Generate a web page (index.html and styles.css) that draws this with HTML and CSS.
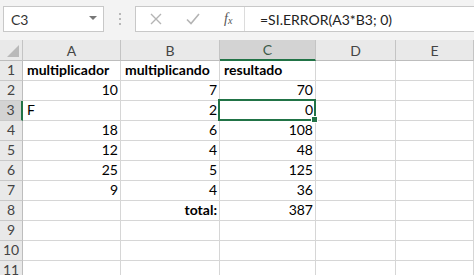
FILE: index.html
```html
<!DOCTYPE html>
<html lang="es">
<head>
    <meta charset="UTF-8">
    <title>Hoja de cálculo</title>
    <link rel="stylesheet" href="styles.css">
</head>
<body>
<div class="topbar">
    <div class="namebox">
        <span class="namebox_text">C3</span>
        <span class="namebox_arrow"></span>
    </div>
    <div class="dots">
        <span></span><span></span><span></span>
    </div>
    <div class="formulabox">
        <div class="formulabox_icons">
            <svg class="ico" width="12" height="12" viewBox="0 0 12 12">
                <path d="M1 1 L11 11 M11 1 L1 11" stroke="#b4b4b4" stroke-width="1.4" fill="none"/>
            </svg>
            <svg class="ico" width="14" height="12" viewBox="0 0 14 12">
                <path d="M1 6.5 L5 10.5 L13 1" stroke="#b4b4b4" stroke-width="1.6" fill="none"/>
            </svg>
            <span class="fx">f<sub>x</sub></span>
        </div>
        <div class="formulabox_text">=SI.ERROR(A3*B3; 0)</div>
    </div>
</div>

<div class="sheet">
    <div class="hd corner"><span class="corner_tri"></span></div>
    <div class="hd">A</div>
    <div class="hd">B</div>
    <div class="hd hd_sel">C</div>
    <div class="hd">D</div>
    <div class="hd">E</div>

    <div class="rh">1</div>
    <div class="c b">multiplicador</div>
    <div class="c b">multiplicando</div>
    <div class="c b">resultado</div>
    <div class="c"></div>
    <div class="c"></div>

    <div class="rh">2</div>
    <div class="c n">10</div>
    <div class="c n">7</div>
    <div class="c n">70</div>
    <div class="c"></div>
    <div class="c"></div>

    <div class="rh rh_sel">3</div>
    <div class="c">F</div>
    <div class="c n">2</div>
    <div class="c n sel">0</div>
    <div class="c"></div>
    <div class="c"></div>

    <div class="rh">4</div>
    <div class="c n">18</div>
    <div class="c n">6</div>
    <div class="c n">108</div>
    <div class="c"></div>
    <div class="c"></div>

    <div class="rh">5</div>
    <div class="c n">12</div>
    <div class="c n">4</div>
    <div class="c n">48</div>
    <div class="c"></div>
    <div class="c"></div>

    <div class="rh">6</div>
    <div class="c n">25</div>
    <div class="c n">5</div>
    <div class="c n">125</div>
    <div class="c"></div>
    <div class="c"></div>

    <div class="rh">7</div>
    <div class="c n">9</div>
    <div class="c n">4</div>
    <div class="c n">36</div>
    <div class="c"></div>
    <div class="c"></div>

    <div class="rh">8</div>
    <div class="c"></div>
    <div class="c n b">total:</div>
    <div class="c n">387</div>
    <div class="c"></div>
    <div class="c"></div>

    <div class="rh">9</div>
    <div class="c"></div>
    <div class="c"></div>
    <div class="c"></div>
    <div class="c"></div>
    <div class="c"></div>

    <div class="rh">10</div>
    <div class="c"></div>
    <div class="c"></div>
    <div class="c"></div>
    <div class="c"></div>
    <div class="c"></div>

    <div class="rh">11</div>
    <div class="c"></div>
    <div class="c"></div>
    <div class="c"></div>
    <div class="c"></div>
    <div class="c"></div>
</div>
</body>
</html>
```

FILE: styles.css
```css
body {
    margin: 0;
    background-color: #ffffff;
    font-family: Lato, "Liberation Sans", sans-serif;
    color: #000000;
    overflow: hidden;
}

/* barra de fórmulas */
.topbar {
    display: flex;
    align-items: flex-start;
    height: 40px;
    padding: 6px 0 0 3px;
    box-sizing: border-box;
    background-color: #f3f3f3;
}

.namebox {
    display: flex;
    align-items: center;
    justify-content: space-between;
    width: 101px;
    height: 26px;
    box-sizing: border-box;
    padding: 0 6px 0 7px;
    background-color: #ffffff;
    border: 1px solid #c8c8c8;
}

.namebox_text {
    font-size: 14px;
    color: #333333;
}

.namebox_arrow {
    width: 0;
    height: 0;
    border-left: 4px solid transparent;
    border-right: 4px solid transparent;
    border-top: 4px solid #777777;
    margin-top: -2px;
}

.dots {
    display: flex;
    flex-direction: column;
    gap: 3px;
    width: 31px;
    align-items: center;
    padding-top: 7px;
}

.dots span {
    width: 2px;
    height: 2px;
    background-color: #b8b8b8;
}

.formulabox {
    display: flex;
    align-items: center;
    flex: 1;
    height: 26px;
    box-sizing: border-box;
    background-color: #ffffff;
    border: 1px solid #c8c8c8;
    border-right: none;
}

.formulabox_icons {
    display: flex;
    align-items: center;
    gap: 24px;
    padding-left: 14px;
    width: 109px;
    box-sizing: border-box;
    border-right: 1px solid #dcdcdc;
    height: 100%;
}

.fx {
    font-family: "Liberation Serif", serif;
    font-style: italic;
    font-size: 14px;
    color: #555555;
}

.fx sub {
    font-size: 10px;
    vertical-align: -1px;
}

.formulabox_text {
    padding-left: 15px;
    font-size: 14px;
    color: #222222;
}

/* hoja */
.sheet {
    display: grid;
    grid-template-columns: 23px 98px 99px 96px 80px 1fr;
    grid-template-rows: 21px;
    grid-auto-rows: 20px;
}

.hd {
    display: flex;
    align-items: center;
    justify-content: center;
    background-color: #e9e9e9;
    border-right: 1px solid #c4c4c4;
    border-bottom: 1px solid #bdbdbd;
    box-sizing: border-box;
    font-size: 14px;
    color: #444444;
}

.hd_sel {
    background-color: #d3d3d3;
    border-bottom: 2px solid #217346;
    color: #3c5a48;
}

.corner {
    align-items: flex-end;
    justify-content: flex-end;
    padding: 0 3px 3px 0;
}

.corner_tri {
    width: 0;
    height: 0;
    border-left: 12px solid transparent;
    border-bottom: 12px solid #b9b9b9;
}

.rh {
    display: flex;
    align-items: flex-end;
    justify-content: center;
    padding-bottom: 2px;
    background-color: #e9e9e9;
    border-right: 1px solid #bdbdbd;
    border-bottom: 1px solid #c9c9c9;
    box-sizing: border-box;
    font-size: 14px;
    color: #444444;
}

.rh_sel {
    background-color: #d3d3d3;
    border-right: 2px solid #217346;
}

.c {
    display: flex;
    align-items: flex-end;
    padding: 0 3px 2px 4px;
    border-right: 1px solid #d6d6d6;
    border-bottom: 1px solid #d6d6d6;
    box-sizing: border-box;
    font-size: 14px;
    white-space: nowrap;
    overflow: hidden;
}

.n {
    justify-content: flex-end;
    padding-right: 2px;
}

.b {
    font-weight: bold;
}

.sel {
    position: relative;
    overflow: visible;
}

.sel::before {
    content: "";
    position: absolute;
    top: -2px;
    left: -2px;
    right: -1px;
    bottom: -1px;
    border: 2px solid #217346;
}

.sel::after {
    content: "";
    position: absolute;
    right: -3px;
    bottom: -3px;
    width: 5px;
    height: 5px;
    background-color: #217346;
    border: 1px solid #ffffff;
}
```
